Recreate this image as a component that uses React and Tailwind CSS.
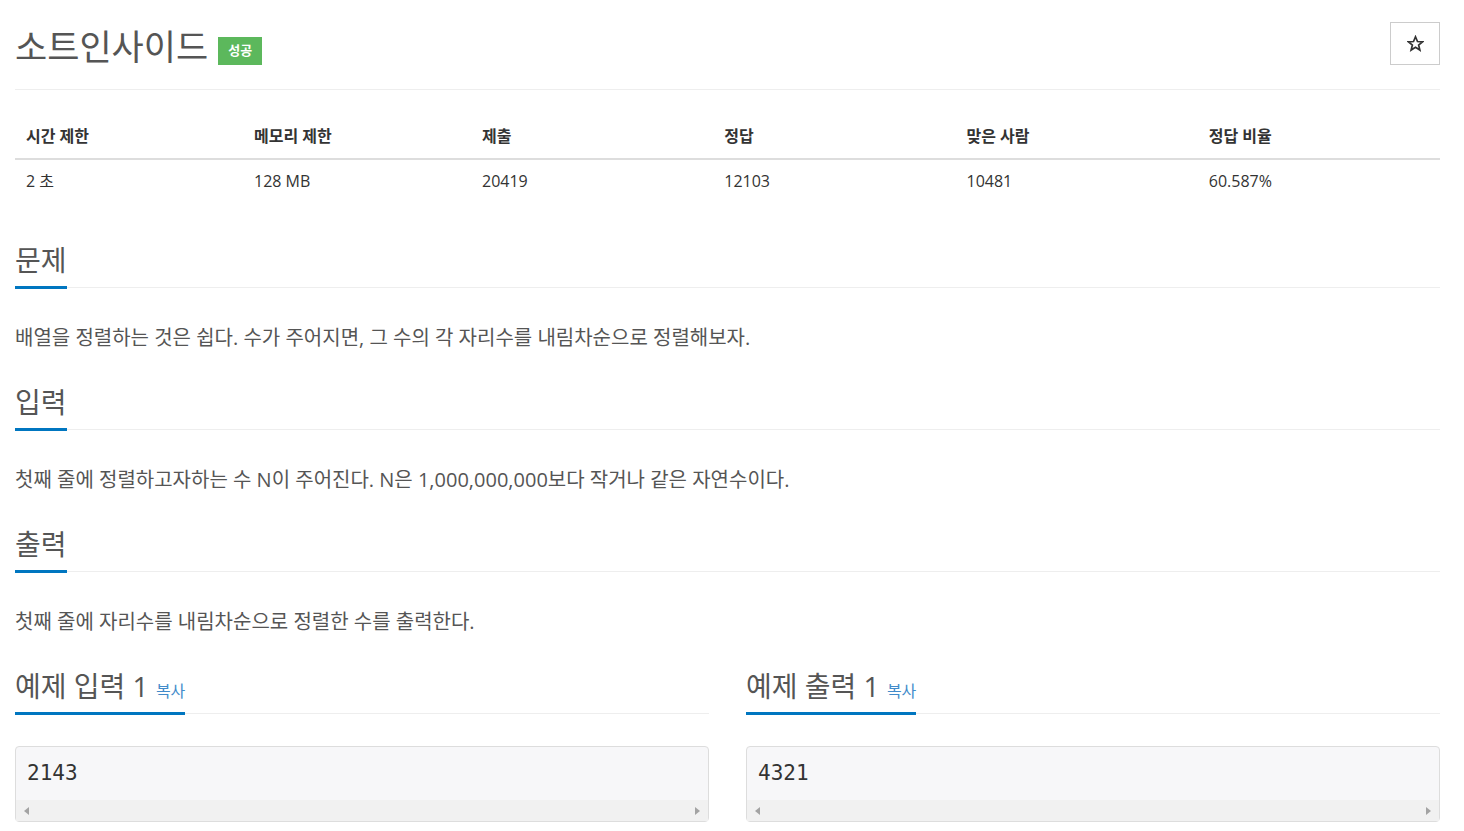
const font = { fontFamily: '"Open Sans", "Noto Sans CJK KR", sans-serif' }

const stats = [
  ['시간 제한', '2 초', 'w-[16%]'],
  ['메모리 제한', '128 MB', 'w-[16%]'],
  ['제출', '20419', 'w-[17%]'],
  ['정답', '12103', 'w-[17%]'],
  ['맞은 사람', '10481', 'w-[17%]'],
  ['정답 비율', '60.587%', 'w-[17%]'],
]

function Headline({ children, className = 'mb-[35px]' }) {
  return (
    <div className={`border-b border-[#eee] ${className}`}>
      <h2 className="inline-block border-b-[3px] border-[#0076c0] -mb-[2px] text-[28px] leading-[40px] pb-[6px] text-[#555] font-normal">
        {children}
      </h2>
    </div>
  )
}

function Section({ title, children }) {
  return (
    <section className="mb-[29px]">
      <Headline>{title}</Headline>
      <p className="text-[20px] leading-[30px] text-[#555]">{children}</p>
    </section>
  )
}

function Sample({ title, value }) {
  return (
    <div>
      <Headline className="mb-[32px]">
        {title} <span className="text-[16px] leading-none text-[#428bca]">복사</span>
      </Headline>
      <div className="border border-[#ddd] bg-[#f7f7f9] rounded-sm">
        <pre className="px-[11px] pt-[12px] pb-[13px] text-[21px] leading-[28px] text-[#333]" style={{ fontFamily: '"DejaVu Sans Mono", monospace' }}>
          {value}
        </pre>
        <div className="h-[21px] bg-[#f1f1f1] flex items-center justify-between px-[8px]">
          <span className="w-0 h-0 border-y-[4px] border-y-transparent border-r-[5px] border-r-[#a3a3a3]" />
          <span className="w-0 h-0 border-y-[4px] border-y-transparent border-l-[5px] border-l-[#a3a3a3]" />
        </div>
      </div>
    </div>
  )
}

export default function App() {
  return (
    <div className="bg-white min-h-screen pl-[15px] pr-[24px] pt-[18px]" style={font}>
      <div className="flex items-start justify-between border-b border-[#eee] pb-[22px]">
        <div className="flex items-end gap-[10px] pt-[9px]">
          <h1 className="text-[35px] leading-[40px] text-[#555] font-normal">소트인사이드</h1>
          <span className="bg-[#5cb85c] text-white text-[13px] font-semibold px-[10px] h-[28px] flex items-center mb-[2px]">성공</span>
        </div>
        <button className="w-[50px] h-[43px] mt-[4px] border border-[#ccc] bg-white flex items-center justify-center">
          <svg width="17" height="17" viewBox="0 0 24 24" fill="none" stroke="#333" strokeWidth="2.4" strokeLinejoin="miter">
            <polygon points="12,2.5 14.8,9.2 22,9.6 16.4,14.2 18.2,21.3 12,17.4 5.8,21.3 7.6,14.2 2,9.6 9.2,9.2" />
          </svg>
        </button>
      </div>

      <table className="w-full mt-[22px] mb-[38px] text-[16px] text-[#333]">
        <thead>
          <tr className="border-b-2 border-[#ddd]">
            {stats.map(([h, , w]) => (
              <th key={h} className={`${w} text-left font-bold px-[11px] pt-[12px] pb-[10px]`}>{h}</th>
            ))}
          </tr>
        </thead>
        <tbody>
          <tr>
            {stats.map(([h, v]) => (
              <td key={h} className="px-[11px] py-[9px]">{v}</td>
            ))}
          </tr>
        </tbody>
      </table>

      <Section title="문제">배열을 정렬하는 것은 쉽다. 수가 주어지면, 그 수의 각 자리수를 내림차순으로 정렬해보자.</Section>
      <Section title="입력">첫째 줄에 정렬하고자하는 수 N이 주어진다. N은 1,000,000,000보다 작거나 같은 자연수이다.</Section>
      <Section title="출력">첫째 줄에 자리수를 내림차순으로 정렬한 수를 출력한다.</Section>

      <div className="grid grid-cols-2 gap-x-[37px]">
        <Sample title="예제 입력 1" value="2143" />
        <Sample title="예제 출력 1" value="4321" />
      </div>
    </div>
  )
}
